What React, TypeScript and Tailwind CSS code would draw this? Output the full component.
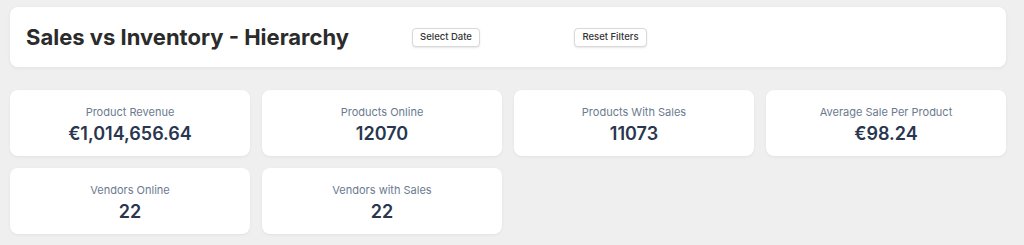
import React from 'react';

const stats: { label: string; value: string }[] = [
  { label: 'Product Revenue', value: '€1,014,656.64' },
  { label: 'Products Online', value: '12070' },
  { label: 'Products With Sales', value: '11073' },
  { label: 'Average Sale Per Product', value: '€98.24' },
  { label: 'Vendors Online', value: '22' },
  { label: 'Vendors with Sales', value: '22' },
];

const StatCard: React.FC<{ label: string; value: string }> = ({ label, value }) => (
  <div className="h-[66px] rounded-lg bg-white shadow-[0_1px_3px_rgba(0,0,0,0.06)] flex flex-col items-center justify-center pt-[5px]">
    <div className="text-[11px] leading-[14px] text-[#6b7a90]">{label}</div>
    <div className="mt-[3px] text-[18px] leading-6 font-semibold text-[#2a3650]">{value}</div>
  </div>
);

const App: React.FC = () => {
  return (
    <div
      className="min-h-[245px] bg-[#efefef] pl-[10px] pr-[18px] pt-[7px] pb-[10px]"
      style={{ fontFamily: 'Inter, "Liberation Sans", sans-serif' }}
    >
      <header className="h-[60px] rounded-lg bg-white shadow-[0_1px_4px_rgba(0,0,0,0.06)] flex items-center px-4">
        <h1 className="w-[325px] whitespace-nowrap text-[22px] font-bold text-[#2b2b2b]">Sales vs Inventory - Hierarchy</h1>
        <button className="ml-[61px] w-[68px] h-[19px] rounded border border-[#d9d9d9] bg-white text-[9.5px] font-medium text-[#333] shadow-[0_1px_2px_rgba(0,0,0,0.1)]">
          Select Date
        </button>
        <button className="ml-[94px] w-[73px] h-[19px] rounded border border-[#d9d9d9] bg-white text-[9.5px] font-medium text-[#333] shadow-[0_1px_2px_rgba(0,0,0,0.1)]">
          Reset Filters
        </button>
      </header>
      <div className="mt-[23px] grid grid-cols-4 gap-x-3 gap-y-3">
        {stats.map((s) => (
          <StatCard key={s.label} label={s.label} value={s.value} />
        ))}
      </div>
    </div>
  );
};

export default App;
